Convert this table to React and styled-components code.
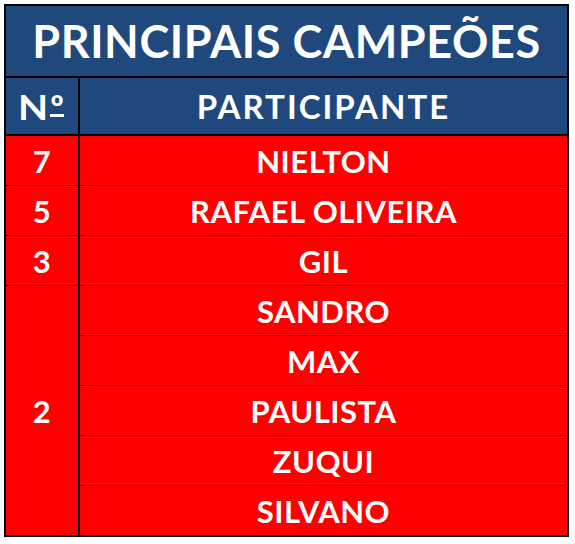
import React from "react";
import styled, { createGlobalStyle } from "styled-components";

const GlobalStyle = createGlobalStyle`
  * { box-sizing: border-box; }
  body {
    margin: 0;
    padding: 4px 0 0 4px;
    background: #ffffff;
    font-family: Lato, "Open Sans", sans-serif;
  }
`;

const Table = styled.table`
  width: 565px;
  border: 2px solid #000;
  border-collapse: separate;
  border-spacing: 0;
  color: #fff;
  font-weight: 700;
  text-align: center;
`;

const TitleCell = styled.th`
  height: 72px;
  padding: 0;
  background: #1f497d;
  border-bottom: 2px solid #000;
  font-size: 45px;
  letter-spacing: 0.6px;
  font-weight: 700;
`;

const HeadCell = styled.th`
  height: 58px;
  padding: 0;
  background: #1f497d;
  border-bottom: 2px solid #000;
  border-right: ${(p) => (p.$first ? "2px solid #000" : "none")};
  width: ${(p) => (p.$first ? "74px" : "auto")};
  font-size: ${(p) => (p.$first ? "34px" : "33px")};
  letter-spacing: ${(p) => (p.$first ? "0" : "2px")};
  font-weight: 700;
`;

const NLetter = styled.span`
  display: inline-block;
  transform: scaleX(1.15);
  margin-right: 2px;
`;

const Ordinal = styled.span`
  display: inline-block;
  line-height: 1;
  height: 0.8em;
  margin-left: 2px;
  border-bottom: 3px solid #fff;
`;

const Cell = styled.td`
  height: ${(p) => (p.$last ? "49px" : "50px")};
  padding: 0;
  background: #ff0000;
  border-bottom: ${(p) => (p.$last ? "none" : "1px solid #2a0000")};
  border-right: ${(p) => (p.$first ? "2px solid #000" : "none")};
  font-size: 31px;
  letter-spacing: 0.5px;
  vertical-align: middle;
`;

const rows = [
  { n: "7", names: ["NIELTON"] },
  { n: "5", names: ["RAFAEL OLIVEIRA"] },
  { n: "3", names: ["GIL"] },
  { n: "2", names: ["SANDRO", "MAX", "PAULISTA", "ZUQUI", "SILVANO"] },
];

export default function App() {
  return (
    <>
      <GlobalStyle />
      <Table>
        <thead>
          <tr>
            <TitleCell colSpan={2}>PRINCIPAIS CAMPEÕES</TitleCell>
          </tr>
          <tr>
            <HeadCell $first>
              <NLetter>N</NLetter>
              <Ordinal>º</Ordinal>
            </HeadCell>
            <HeadCell>PARTICIPANTE</HeadCell>
          </tr>
        </thead>
        <tbody>
          {rows.map((group, gi) => {
            const lastGroup = gi === rows.length - 1;
            return group.names.map((name, i) => {
              const last = lastGroup && i === group.names.length - 1;
              return (
                <tr key={name}>
                  {i === 0 && (
                    <Cell $first $last={lastGroup} rowSpan={group.names.length}>
                      {group.n}
                    </Cell>
                  )}
                  <Cell $last={last}>{name}</Cell>
                </tr>
              );
            });
          })}
        </tbody>
      </Table>
    </>
  );
}
